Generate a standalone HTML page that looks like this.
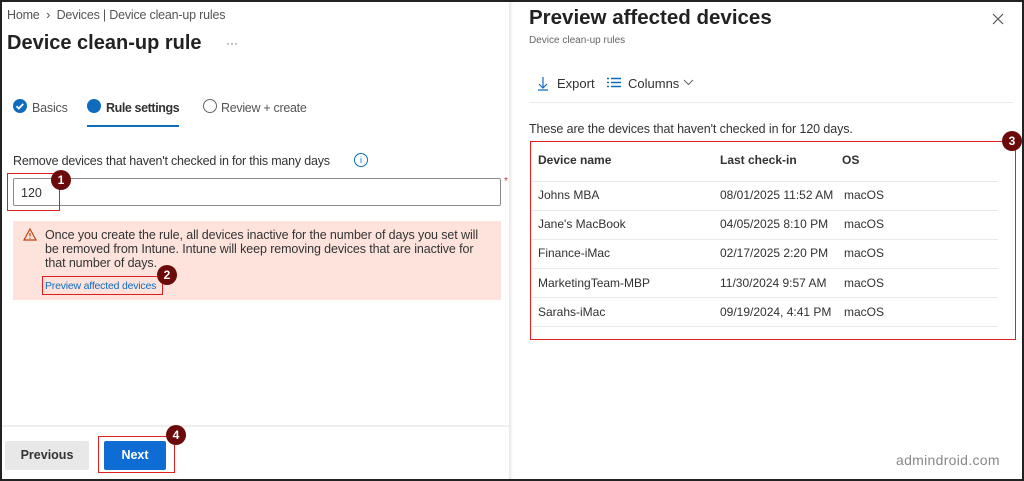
<!DOCTYPE html>
<html><head><style>
*{margin:0;padding:0;box-sizing:border-box}
body{width:1024px;height:481px;overflow:hidden;font-family:"Liberation Sans",sans-serif;color:#323130;background:#fff;position:relative}
.a{position:absolute}
.badge{position:absolute;width:20px;height:20px;border-radius:50%;background:#6b0a0a;color:#fff;font-size:12px;text-align:center;line-height:20px;font-weight:bold}
.row{position:absolute;left:538px;font-size:12px;color:#323130}
.sep{position:absolute;left:532px;width:466px;height:1px;background:#e9e9e9}
</style></head><body>
<div class="a" style="inset:0;border:2px solid #222;z-index:5;pointer-events:none"></div>
<div class="a" style="left:7px;top:8px;font-size:12.5px;color:#555;letter-spacing:-0.2px">Home &nbsp;›&nbsp; Devices | Device clean-up rules</div>
<div class="a" style="left:7px;top:32px;font-size:20px;font-weight:bold;color:#222">Device clean-up rule</div>
<div class="a" style="left:226px;top:36px;font-size:12px;color:#666">···</div>
<!-- tabs -->
<svg class="a" style="left:13px;top:99px" width="14" height="14"><circle cx="7" cy="7" r="7" fill="#0f6cbd"/><path d="M3.5 7.2l2.3 2.3 4.5-4.6" stroke="#fff" stroke-width="1.8" fill="none"/></svg>
<div class="a" style="left:32px;top:101px;font-size:12.5px;color:#555;letter-spacing:-0.2px">Basics</div>
<div class="a" style="left:87px;top:99px;width:14px;height:14px;border-radius:50%;background:#0f6cbd"></div>
<div class="a" style="left:106px;top:101px;font-size:12.5px;font-weight:bold;color:#333;letter-spacing:-0.4px">Rule settings</div>
<div class="a" style="left:87px;top:125px;width:92px;height:2px;background:#0f6cbd"></div>
<div class="a" style="left:203px;top:99px;width:14px;height:14px;border-radius:50%;border:1.5px solid #666"></div>
<div class="a" style="left:221px;top:101px;font-size:12.5px;color:#555;letter-spacing:-0.3px">Review + create</div>
<div class="a" style="left:13px;top:154px;font-size:12.5px;color:#333;letter-spacing:-0.2px">Remove devices that haven't checked in for this many days</div>
<div class="a" style="left:354px;top:153px;width:14px;height:14px;border-radius:50%;border:1.3px solid #0f6cbd;color:#0f6cbd;font-size:9px;text-align:center;line-height:12px">i</div>
<div class="a" style="left:13px;top:178px;width:488px;height:28px;border:1px solid #8a8a8a;border-radius:2px"></div>
<div class="a" style="left:21px;top:186px;font-size:12.5px">120</div>
<div class="a" style="left:504px;top:176px;font-size:10px;color:#c33">*</div>
<div class="a" style="left:7px;top:173px;width:53px;height:38px;border:1.5px solid #e02020"></div>
<div class="badge" style="left:51px;top:170px">1</div>
<div class="a" style="left:13px;top:221px;width:488px;height:79px;background:#fde3dc"></div>
<svg class="a" style="left:23px;top:228px" width="14" height="13"><path d="M7 1L13 12H1Z" fill="none" stroke="#c2410c" stroke-width="1.2"/><path d="M7 5v3.5M7 9.8v1" stroke="#c2410c" stroke-width="1.2"/></svg>
<div class="a" style="left:45px;top:228px;width:450px;font-size:12.5px;line-height:14px;color:#333;letter-spacing:-0.1px">Once you create the rule, all devices inactive for the number of days you set will be removed from Intune. Intune will keep removing devices that are inactive for that number of days.</div>
<div class="a" style="left:45px;top:280px;font-size:10.5px;color:#0f6cbd;letter-spacing:-0.2px">Preview affected devices</div>
<div class="a" style="left:42px;top:276px;width:121px;height:19px;border:1.5px solid #e02020"></div>
<div class="badge" style="left:157px;top:265px">2</div>
<!-- footer -->
<div class="a" style="left:2px;top:425px;width:509px;height:2px;background:#eee"></div>
<div class="a" style="left:5px;top:441px;width:84px;height:29px;background:#e8e8e8;border-radius:2px;font-size:12.5px;font-weight:bold;text-align:center;line-height:29px;color:#333">Previous</div>
<div class="a" style="left:104px;top:441px;width:62px;height:29px;background:#0f6cd4;border-radius:2px;font-size:12.5px;font-weight:bold;text-align:center;line-height:29px;color:#fff">Next</div>
<div class="a" style="left:98px;top:436px;width:77px;height:37px;border:1.5px solid #e02020"></div>
<div class="badge" style="left:166px;top:425px">4</div>
<!-- right panel -->
<div class="a" style="left:509px;top:0;width:4px;height:481px;background:linear-gradient(90deg,#e6e6e6,#fff)"></div>
<div class="a" style="left:529px;top:6px;font-size:20.5px;font-weight:bold;color:#222">Preview affected devices</div>
<div class="a" style="left:529px;top:35px;font-size:10px;color:#666">Device clean-up rules</div>
<svg class="a" style="left:992px;top:13px" width="12" height="12"><path d="M1 1L11 11M11 1L1 11" stroke="#555" stroke-width="1.2"/></svg>
<svg class="a" style="left:537px;top:76px" width="12" height="15"><path d="M6 1v11M2 8l4 4 4-4M1 14h10" stroke="#0f6cbd" stroke-width="1.2" fill="none"/></svg>
<div class="a" style="left:557px;top:76px;font-size:13px;color:#333">Export</div>
<svg class="a" style="left:607px;top:77px" width="14" height="11"><path d="M0 1.5h2M4 1.5h10M0 5.5h2M4 5.5h10M0 9.5h2M4 9.5h10" stroke="#0f6cbd" stroke-width="1.4"/></svg>
<div class="a" style="left:628px;top:76px;font-size:13px;color:#333">Columns</div>
<svg class="a" style="left:683px;top:79px" width="11" height="7"><path d="M1 1l4.5 4.5L10 1" stroke="#666" fill="none"/></svg>
<div class="a" style="left:529px;top:102px;width:484px;height:1px;background:#eaeaea"></div>
<div class="a" style="left:529px;top:122px;font-size:12.5px;color:#333;letter-spacing:-0.1px">These are the devices that haven't checked in for 120 days.</div>
<div class="a" style="left:530px;top:141px;width:486px;height:199px;border:1.5px solid #e02020"></div>
<div class="badge" style="left:1002px;top:131px">3</div>
<div class="row" style="top:153px;font-weight:bold">Device name</div>
<div class="row" style="top:153px;left:720px;font-weight:bold">Last check-in</div>
<div class="row" style="top:153px;left:842px;font-weight:bold">OS</div>
<div class="sep" style="top:181px"></div>
<div class="row" style="top:188px">Johns MBA</div><div class="row" style="top:188px;left:720px">08/01/2025 11:52 AM</div><div class="row" style="top:188px;left:844px">macOS</div>
<div class="sep" style="top:210px"></div>
<div class="row" style="top:217px">Jane's MacBook</div><div class="row" style="top:217px;left:720px">04/05/2025 8:10 PM</div><div class="row" style="top:217px;left:844px">macOS</div>
<div class="sep" style="top:239px"></div>
<div class="row" style="top:246px">Finance-iMac</div><div class="row" style="top:246px;left:720px">02/17/2025 2:20 PM</div><div class="row" style="top:246px;left:844px">macOS</div>
<div class="sep" style="top:268px"></div>
<div class="row" style="top:276px">MarketingTeam-MBP</div><div class="row" style="top:276px;left:720px">11/30/2024 9:57 AM</div><div class="row" style="top:276px;left:844px">macOS</div>
<div class="sep" style="top:297px"></div>
<div class="row" style="top:305px">Sarahs-iMac</div><div class="row" style="top:305px;left:720px">09/19/2024, 4:41 PM</div><div class="row" style="top:305px;left:844px">macOS</div>
<div class="sep" style="top:326px"></div>
<div class="a" style="left:896px;top:452px;font-size:14px;color:#888;letter-spacing:0.3px">admindroid.com</div>
</body></html>
